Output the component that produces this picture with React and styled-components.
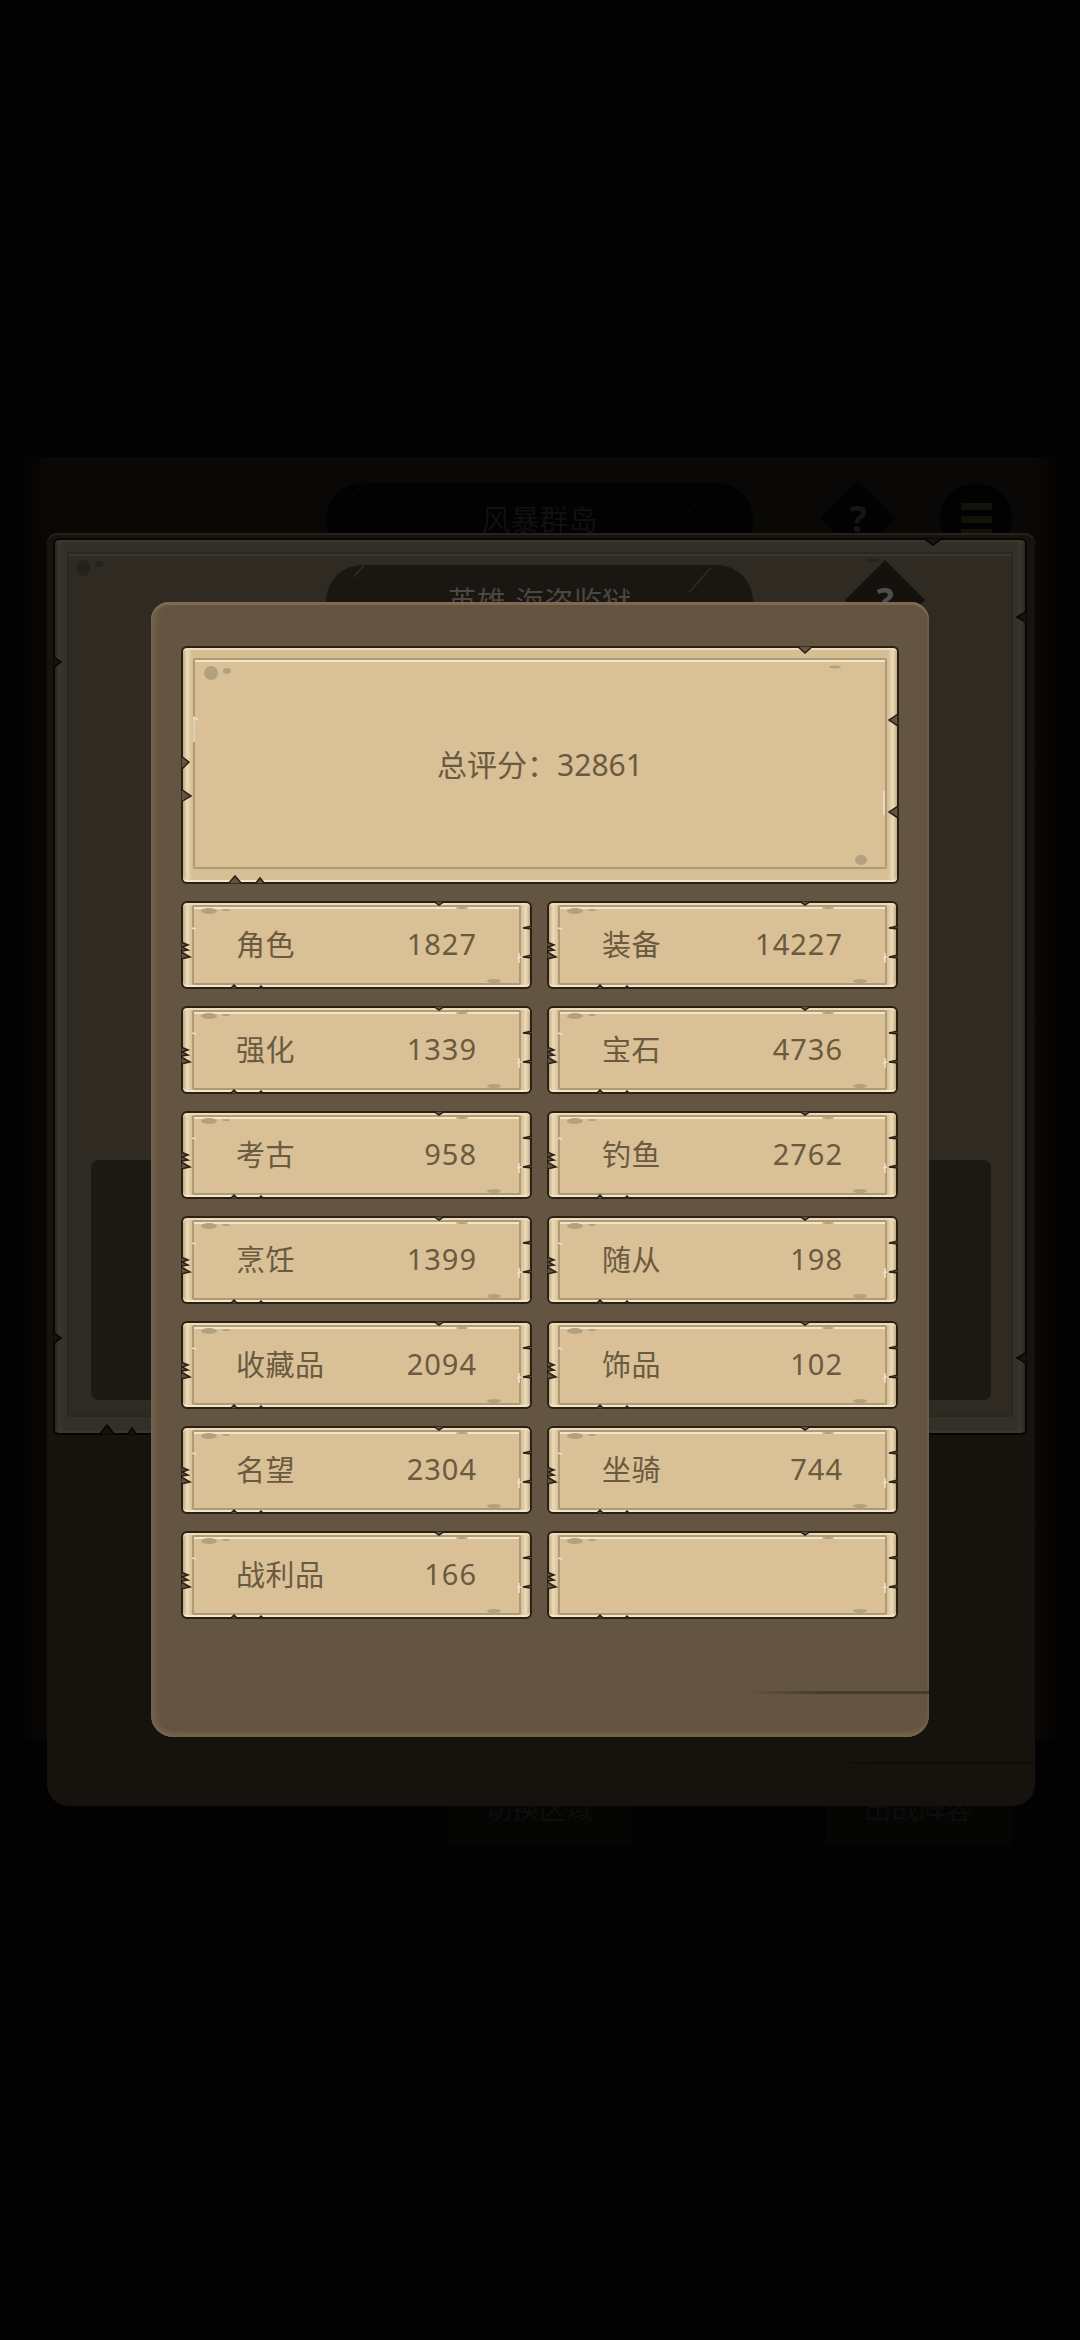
import React from "react";
import styled, { createGlobalStyle } from "styled-components";

const light = {
  edge: "#2a2114",
  bevelDark: "#bfa87f",
  bevelLight: "#ecdcba",
  bevel: "#d6bf95",
  shine: "#f2e5c8",
  line: "#ae9b76",
  body: "#d9c096",
  speck: "#b3a07e",
  cut: "#645442",
  wear: "#efe2c6",
};
const dim = {
  edge: "#080604",
  bevelDark: "#2a261f",
  bevelLight: "#3a362c",
  bevel: "#33302a",
  shine: "#3a362c",
  line: "#2a2720",
  body: "#2f2b23",
  speck: "#25221b",
  cut: "#16120d",
  wear: "#3a362c",
};

// chips and stains of the parchment frames, in px from the frame corner
const smallMarks = {
  w: 351,
  h: 88,
  notches: [
    [252, 0, 258, 4, 264, 0],
    [0, 41, 7, 44, 1, 46, 7, 49, 0, 50],
    [0, 51, 9, 56, 0, 58],
    [351, 25, 342, 27, 351, 28],
    [351, 54, 342, 56, 351, 57],
    [49, 88, 53, 84, 57, 88],
    [77, 88, 80, 85, 83, 88],
  ],
  specks: [
    [28, 10, 8, 3],
    [45, 9, 4, 1],
    [281, 7, 6, 1],
    [313, 80, 7, 2],
  ],
  shines: ["M11 27l4 1", "M336 57l4-1M338 52v10"],
};
const bigMarks = {
  w: 717,
  h: 238,
  notches: [
    [616, 0, 624, 7, 632, 0],
    [0, 110, 8, 116, 2, 122, 0, 122],
    [0, 143, 10, 150, 0, 156],
    [717, 68, 708, 74, 717, 80],
    [717, 160, 708, 166, 717, 172],
    [47, 238, 54, 230, 61, 238],
    [74, 238, 79, 232, 84, 238],
  ],
  specks: [
    [30, 27, 7, 7],
    [46, 25, 4, 3],
    [654, 21, 6, 1.5],
    [680, 214, 6, 5],
  ],
  shines: ["M12 71l5 3M13 72v24", "M703 145v24"],
};
const backMarks = {
  w: 974,
  h: 897,
  notches: [
    [870, 0, 880, 7, 890, 0],
    [0, 118, 8, 124, 0, 130],
    [974, 73, 964, 79, 974, 85],
    [0, 794, 8, 800, 0, 806],
    [974, 814, 964, 820, 974, 826],
    [46, 897, 54, 887, 62, 897],
    [74, 897, 79, 890, 84, 897],
  ],
  specks: [
    [30, 30, 7, 8],
    [46, 26, 4, 3],
    [820, 22, 6, 1.5],
    [875, 812, 8, 4],
  ],
  shines: [],
};

const GlobalStyle = createGlobalStyle`
  html, body {
    margin: 0;
    padding: 0;
    background: #020202;
  }
  body {
    font-family: "Noto Sans", "Noto Sans CJK SC", sans-serif;
  }
`;

const Screen = styled.div`
  position: relative;
  width: 1080px;
  height: 2340px;
  padding-top: 457px;
  box-sizing: border-box;
  overflow: hidden;
  background: #020202;
  display: flex;
  flex-direction: column;
  align-items: center;
`;

const BackPanel = styled.section`
  box-sizing: border-box;
  width: 1043px;
  height: 1283px;
  margin-left: 3px;
  padding: 26px 0 0 306px;
  border-radius: 10px;
  background: linear-gradient(
    to right,
    #020201 0,
    #0a0806 28px,
    #0a0806 1015px,
    #020201 100%
  );
`;

const HeaderRow = styled.div`
  display: flex;
  align-items: flex-start;
  gap: ${(p) => p.$gap}px;
`;

const Pill = styled.div`
  position: relative;
  width: 427px;
  height: 74px;
  flex: none;
  border-radius: 36px;
  background: ${(p) => p.$bg};
  color: ${(p) => p.$fg};
  font-size: 29px;
  line-height: 74px;
  text-align: center;
  overflow: hidden;
  &::before,
  &::after {
    content: "";
    position: absolute;
    top: -2px;
    width: 2px;
    height: 34px;
    background: ${(p) => p.$fg};
    opacity: 0.35;
    transform: rotate(42deg);
  }
  &::before {
    left: 32px;
    height: 16px;
  }
  &::after {
    right: 52px;
  }
`;

const Diamond = styled.div`
  flex: none;
  width: ${(p) => p.$size}px;
  height: ${(p) => p.$size}px;
  margin-top: ${(p) => p.$top}px;
  background: ${(p) => p.$bg};
  color: ${(p) => p.$fg};
  clip-path: polygon(50% 0, 100% 50%, 50% 100%, 0 50%);
  display: flex;
  align-items: center;
  justify-content: center;
  font-size: 36px;
  font-weight: 700;
`;

const MenuButton = styled.div`
  flex: none;
  width: 72px;
  height: 72px;
  margin-left: -23px;
  border-radius: 50%;
  background: #020202;
  display: flex;
  flex-direction: column;
  align-items: center;
  justify-content: center;
  gap: 6px;
  span {
    width: 31px;
    height: 7px;
    background: #14110a;
  }
`;

const FooterRow = styled.div`
  display: flex;
  gap: 193px;
  margin: 40px 0 0 378px;
`;

const FooterButton = styled.div`
  width: 186px;
  height: 65px;
  box-sizing: border-box;
  padding-top: 8px;
  background: #050504;
  color: #0e0d0b;
  font-size: 27px;
  text-align: center;
`;

const MidPanel = styled.section`
  position: absolute;
  top: 533px;
  left: 47px;
  box-sizing: border-box;
  width: 988px;
  height: 1273px;
  padding: 5px 8px 0 6px;
  border-radius: 10px 10px 22px 22px;
  background: #16120d;
  box-shadow: inset 0 2px 0 #2a2018;
  &::after {
    content: "";
    position: absolute;
    right: 0;
    bottom: 42px;
    width: 220px;
    height: 2px;
    background: linear-gradient(to right, transparent, #100d09 30%);
  }
`;

const Frame = styled.div`
  position: relative;
  box-sizing: border-box;
  height: ${(p) => p.$h}px;
  border: 2px solid ${(p) => p.$tone.edge};
  border-radius: 6px;
  background: linear-gradient(
    to right,
    ${(p) => p.$tone.bevelDark} 0,
    ${(p) => p.$tone.bevelLight} 4px,
    ${(p) => p.$tone.bevel} 9px,
    ${(p) => p.$tone.bevel} calc(100% - 9px),
    ${(p) => p.$tone.bevelLight} calc(100% - 4px),
    ${(p) => p.$tone.bevelDark} 100%
  );
  box-shadow: inset 0 -2px 0 ${(p) => p.$tone.shine},
    inset 0 2px 0 ${(p) => p.$tone.bevelLight};
  &::before {
    content: "";
    position: absolute;
    top: ${(p) => p.$inset[0]}px;
    right: ${(p) => p.$inset[1]}px;
    bottom: ${(p) => p.$inset[2]}px;
    left: ${(p) => p.$inset[3]}px;
    border: 2px solid ${(p) => p.$tone.line};
    border-radius: 2px;
    background: ${(p) => p.$tone.body};
    box-shadow: inset 0 2px 0 ${(p) => p.$tone.shine};
  }
`;

const BackCard = styled(Frame)`
  padding: 25px 0 33px 271px;
  display: flex;
  flex-direction: column;
  & > * {
    position: relative;
  }
`;

const DarkInset = styled.div`
  width: 900px;
  height: 240px;
  margin: auto 0 0 -235px;
  border-radius: 8px;
  background: #1c1814;
`;

const Overlay = styled.div`
  position: absolute;
  top: 602px;
  left: 151px;
`;

const Modal = styled.main`
  position: relative;
  box-sizing: border-box;
  width: 778px;
  height: 1135px;
  padding: 44px 30px 0 30px;
  border-radius: 18px 18px 22px 22px;
  background: #645442;
  box-shadow: inset 0 3px 0 #7e6b4f, inset 6px 0 6px -2px #76654f,
    inset 0 -5px 4px -1px #77644a, inset -2px 0 2px #6b5b47;
  &::after {
    content: "";
    position: absolute;
    right: 0;
    bottom: 43px;
    width: 186px;
    height: 3px;
    background: linear-gradient(to right, transparent, #483b2c 45%);
  }
`;

const TotalCard = styled(Frame)`
  display: flex;
  align-items: center;
  justify-content: center;
  font-size: 30px;
  color: #6a5a40;
`;

const StatGrid = styled.div`
  display: grid;
  grid-template-columns: 351px 351px;
  grid-auto-rows: 88px;
  gap: 17px 15px;
  margin-top: 17px;
`;

const StatCard = styled(Frame)`
  display: flex;
  align-items: center;
  justify-content: space-between;
  padding: 0 53px 0 53px;
  font-size: 29px;
  letter-spacing: 0.5px;
  color: #6a5a40;
`;

const CardText = styled.span`
  position: relative;
  top: -2px;
`;

const StatValue = styled(CardText)`
  letter-spacing: 1px;
`;

const Marks = styled.svg`
  position: absolute;
  top: -2px;
  left: -2px;
  pointer-events: none;
`;

// parchment wear drawn over a frame
function FrameMarks({ marks, tone }) {
  return (
    <Marks width={marks.w} height={marks.h} viewBox={`0 0 ${marks.w} ${marks.h}`}>
      {marks.specks.map(([cx, cy, rx, ry]) => (
        <ellipse key={`${cx}-${cy}`} cx={cx} cy={cy} rx={rx} ry={ry} fill={tone.speck} />
      ))}
      {marks.shines.map((d) => (
        <path key={d} d={d} stroke={tone.wear} strokeWidth="1.5" fill="none" />
      ))}
      {marks.notches.map((n) => (
        <polygon
          key={n.join()}
          points={n.join(" ")}
          fill={tone.cut}
          stroke={tone.edge}
          strokeWidth="1.5"
        />
      ))}
    </Marks>
  );
}

const stats = [
  ["角色", "1827"],
  ["装备", "14227"],
  ["强化", "1339"],
  ["宝石", "4736"],
  ["考古", "958"],
  ["钓鱼", "2762"],
  ["烹饪", "1399"],
  ["随从", "198"],
  ["收藏品", "2094"],
  ["饰品", "102"],
  ["名望", "2304"],
  ["坐骑", "744"],
  ["战利品", "166"],
  ["", ""],
];

export default function App() {
  return (
    <Screen>
      <GlobalStyle />
      <BackPanel>
        <HeaderRow $gap={67}>
          <Pill $bg="#020202" $fg="#12100e">风暴群岛</Pill>
          <Diamond $size={76} $top={-3} $bg="#020202" $fg="#14161a">?</Diamond>
          <MenuButton>
            <span />
            <span />
            <span />
          </MenuButton>
        </HeaderRow>
      </BackPanel>
      <FooterRow>
        <FooterButton>切换区域</FooterButton>
        <FooterButton>出战阵容</FooterButton>
      </FooterRow>

      <MidPanel>
        <BackCard $h={897} $tone={dim} $inset={[12, 12, 16, 12]}>
          <FrameMarks marks={backMarks} tone={dim} />
          <HeaderRow $gap={92}>
            <Pill $bg="#1a1611" $fg="#4a4844">英雄-海盗监狱</Pill>
            <Diamond $size={80} $top={-5} $bg="#15120e" $fg="#4d4e50">?</Diamond>
          </HeaderRow>
          <DarkInset />
        </BackCard>
      </MidPanel>

      <Overlay>
        <Modal>
          <TotalCard $h={238} $tone={light} $inset={[10, 10, 13, 10]}>
            <CardText>总评分：32861</CardText>
            <FrameMarks marks={bigMarks} tone={light} />
          </TotalCard>
          <StatGrid>
            {stats.map(([label, value], i) => (
              <StatCard key={i} $h={88} $tone={light} $inset={[2, 9, 2, 9]}>
                <CardText>{label}</CardText>
                <StatValue>{value}</StatValue>
                <FrameMarks marks={smallMarks} tone={light} />
              </StatCard>
            ))}
          </StatGrid>
        </Modal>
      </Overlay>
    </Screen>
  );
}
